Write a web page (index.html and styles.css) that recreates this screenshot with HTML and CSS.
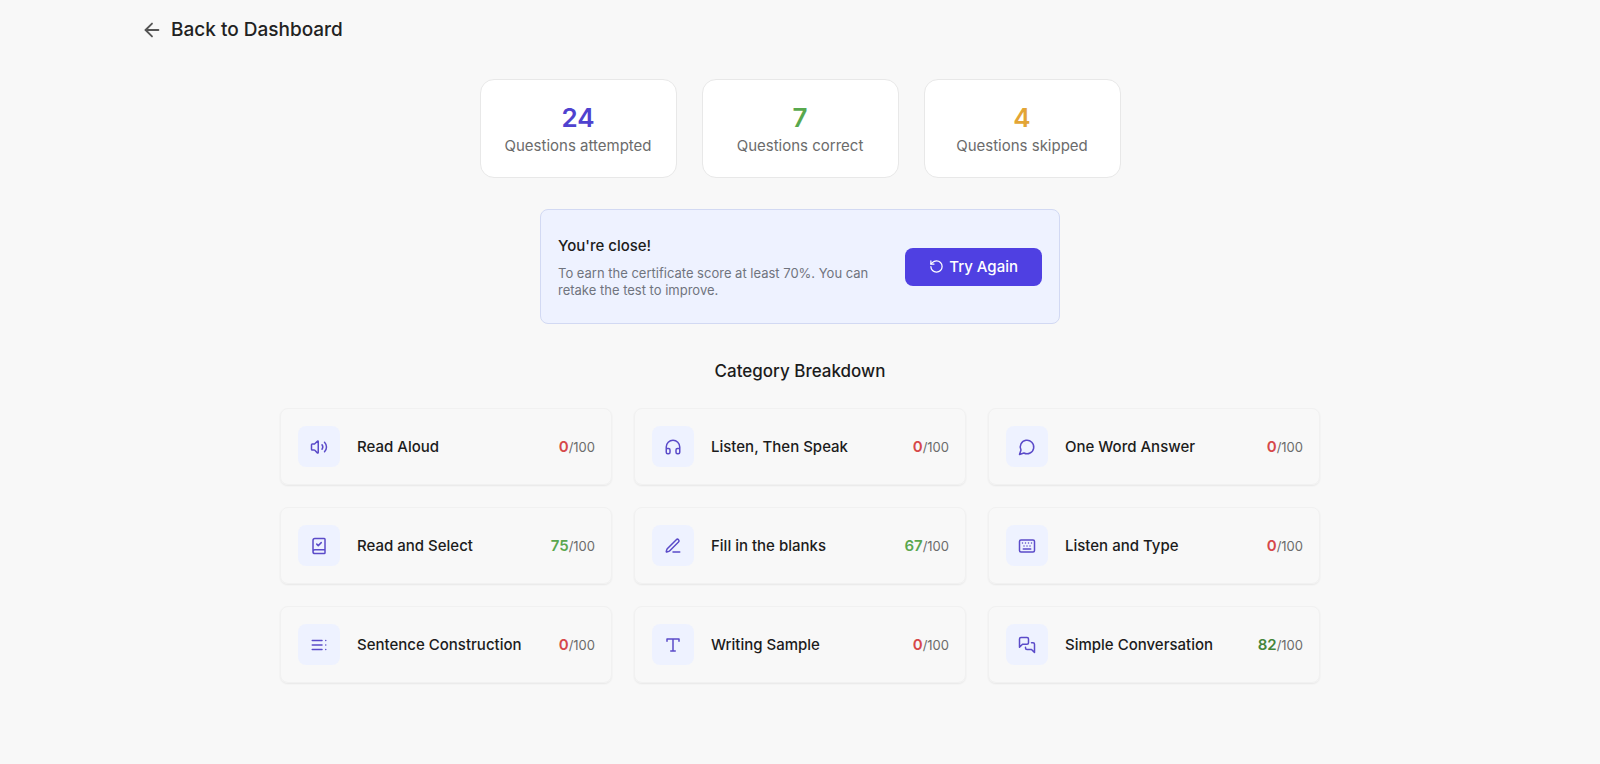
FILE: index.html
```html
<!DOCTYPE html>
<html lang="en">
<head>
    <meta charset="UTF-8">
    <meta name="viewport" content="width=device-width, initial-scale=1.0">
    <title>Test Results</title>
    <link rel="stylesheet" href="styles.css">
</head>
<body>
    <header class="page-header">
        <a href="#" class="back-link">
            <svg class="back-icon" viewBox="0 0 24 24"><path d="m12 19-7-7 7-7"/><path d="M19 12H5"/></svg>
            Back to Dashboard
        </a>
    </header>

    <main>
        <!-- Totals -->
        <section class="stats">
            <div class="stat-card">
                <p class="stat-value attempted">24</p>
                <p class="stat-label">Questions attempted</p>
            </div>
            <div class="stat-card">
                <p class="stat-value correct">7</p>
                <p class="stat-label">Questions correct</p>
            </div>
            <div class="stat-card">
                <p class="stat-value skipped">4</p>
                <p class="stat-label">Questions skipped</p>
            </div>
        </section>

        <!-- Retake banner -->
        <section class="retake">
            <div class="retake-text">
                <h2>You're close!</h2>
                <p>To earn the certificate score at least 70%. You can retake the test to improve.</p>
            </div>
            <button type="button" class="retake-button">
                <svg class="retake-icon" viewBox="0 0 24 24"><path d="M3 12a9 9 0 1 0 9-9 9.75 9.75 0 0 0-6.74 2.74L3 8"/><path d="M3 3v5h5"/></svg>
                Try Again
            </button>
        </section>

        <!-- Categories -->
        <section class="breakdown">
            <h2>Category Breakdown</h2>
            <ul class="categories">
                <li class="category">
                    <span class="category-icon">
                        <svg viewBox="0 0 24 24"><path d="M11 4.7a.7.7 0 0 0-1.2-.5L6.4 7.6A1.4 1.4 0 0 1 5.4 8H3a1 1 0 0 0-1 1v6a1 1 0 0 0 1 1h2.4a1.4 1.4 0 0 1 1 .4l3.4 3.4a.7.7 0 0 0 1.2-.5z"/><path d="M16 9a5 5 0 0 1 0 6"/><path d="M19.36 18.36a9 9 0 0 0 0-12.72"/></svg>
                    </span>
                    <span class="category-name">Read Aloud</span>
                    <span class="score"><b class="low">0</b>/100</span>
                </li>
                <li class="category">
                    <span class="category-icon">
                        <svg viewBox="0 0 24 24"><path d="M3 14h3a2 2 0 0 1 2 2v3a2 2 0 0 1-2 2H5a2 2 0 0 1-2-2v-7a9 9 0 0 1 18 0v7a2 2 0 0 1-2 2h-1a2 2 0 0 1-2-2v-3a2 2 0 0 1 2-2h3"/></svg>
                    </span>
                    <span class="category-name">Listen, Then Speak</span>
                    <span class="score"><b class="low">0</b>/100</span>
                </li>
                <li class="category">
                    <span class="category-icon">
                        <svg viewBox="0 0 24 24"><path d="M7.9 20A9 9 0 1 0 4 16.1L2 22Z"/></svg>
                    </span>
                    <span class="category-name">One Word Answer</span>
                    <span class="score"><b class="low">0</b>/100</span>
                </li>
                <li class="category">
                    <span class="category-icon">
                        <svg viewBox="0 0 24 24"><path d="M4 19.5v-15A2.5 2.5 0 0 1 6.5 2H19a1 1 0 0 1 1 1v18a1 1 0 0 1-1 1H6.5a1 1 0 0 1 0-5H20"/><path d="m9 9.5 2 2 4-4"/></svg>
                    </span>
                    <span class="category-name">Read and Select</span>
                    <span class="score"><b class="good">75</b>/100</span>
                </li>
                <li class="category">
                    <span class="category-icon">
                        <svg viewBox="0 0 24 24"><path d="M12 20h9"/><path d="M16.38 3.62a1 1 0 0 1 3 3L7.37 18.64a2 2 0 0 1-.86.5l-2.87.84a.5.5 0 0 1-.62-.62l.84-2.87a2 2 0 0 1 .5-.86z"/></svg>
                    </span>
                    <span class="category-name">Fill in the blanks</span>
                    <span class="score"><b class="good">67</b>/100</span>
                </li>
                <li class="category">
                    <span class="category-icon">
                        <svg viewBox="0 0 24 24"><rect x="2" y="4" width="20" height="16" rx="2"/><path d="M6 8h.01M10 8h.01M14 8h.01M18 8h.01M8 12h.01M12 12h.01M16 12h.01M7 16h10"/></svg>
                    </span>
                    <span class="category-name">Listen and Type</span>
                    <span class="score"><b class="low">0</b>/100</span>
                </li>
                <li class="category">
                    <span class="category-icon">
                        <svg viewBox="0 0 24 24"><path d="M16 12H3M16 18H3M16 6H3M21 12h.01M21 18h.01M21 6h.01"/></svg>
                    </span>
                    <span class="category-name">Sentence Construction</span>
                    <span class="score"><b class="low">0</b>/100</span>
                </li>
                <li class="category">
                    <span class="category-icon">
                        <svg viewBox="0 0 24 24"><path d="M4 7V4h16v3M9 20h6M12 4v16"/></svg>
                    </span>
                    <span class="category-name">Writing Sample</span>
                    <span class="score"><b class="low">0</b>/100</span>
                </li>
                <li class="category">
                    <span class="category-icon">
                        <svg viewBox="0 0 24 24"><path d="M14 9a2 2 0 0 1-2 2H6l-4 4V4a2 2 0 0 1 2-2h8a2 2 0 0 1 2 2z"/><path d="M18 9h2a2 2 0 0 1 2 2v11l-4-4h-6a2 2 0 0 1-2-2v-1"/></svg>
                    </span>
                    <span class="category-name">Simple Conversation</span>
                    <span class="score"><b class="high">82</b>/100</span>
                </li>
            </ul>
        </section>
    </main>
</body>
</html>
```
FILE: styles.css
```css
* {
    box-sizing: border-box;
    margin: 0;
    padding: 0;
}

body {
    font-family: Inter, sans-serif;
    font-size: 15px;
    background-color: #f8f8f8;
    color: #1c1c1c;
}

svg {
    fill: none;
    stroke: currentColor;
    stroke-width: 2;
    stroke-linecap: round;
    stroke-linejoin: round;
}

.page-header {
    max-width: 1318px;
    margin: 0 auto;
    padding-top: 18px;
}

.back-link {
    display: inline-flex;
    align-items: center;
    gap: 8px;
    color: #222;
    font-size: 19px;
    font-weight: 500;
    line-height: 24px;
    text-decoration: none;
}

.back-icon {
    width: 22px;
    height: 22px;
    color: #555;
}

main {
    display: flex;
    flex-direction: column;
    align-items: center;
    padding: 34px 20px 80px;
}

.stats {
    display: grid;
    grid-template-columns: repeat(3, 1fr);
    gap: 25px;
    width: 100%;
    max-width: 641px;
}

.stat-card {
    padding: 22px 16px 20px;
    background-color: #fff;
    border: 1px solid #e8e8e8;
    border-radius: 14px;
    text-align: center;
}

.stat-value {
    font-size: 26px;
    font-weight: 600;
    line-height: 32px;
}

.stat-label {
    color: #6b6b6b;
    line-height: 23px;
}

.attempted {
    color: #4f42cf;
}

.correct {
    color: #58a84e;
}

.skipped {
    color: #e3a536;
}

.retake {
    display: flex;
    align-items: center;
    justify-content: space-between;
    gap: 24px;
    width: 100%;
    max-width: 520px;
    margin-top: 31px;
    padding: 24px 17px;
    background-color: #eef2ff;
    border: 1px solid #d2d9f3;
    border-radius: 8px;
}

.retake-text {
    max-width: 320px;
}

.retake-text h2 {
    margin-bottom: 7px;
    font-size: 15px;
    font-weight: 500;
    line-height: 24px;
}

.retake-text p {
    color: #70747e;
    font-size: 13px;
    line-height: 17px;
}

.retake-button {
    display: flex;
    flex-shrink: 0;
    align-items: center;
    gap: 5px;
    padding: 8px 24px;
    background-color: #4f40e2;
    border: none;
    border-radius: 8px;
    color: #fff;
    font-family: inherit;
    font-size: 15px;
    font-weight: 500;
    line-height: 22px;
    cursor: pointer;
}

.retake-icon {
    width: 15px;
    height: 15px;
}

.breakdown {
    width: 100%;
    max-width: 1040px;
    margin-top: 34px;
}

.breakdown h2 {
    font-size: 17px;
    font-weight: 500;
    line-height: 26px;
    text-align: center;
}

.categories {
    display: grid;
    grid-template-columns: repeat(3, 1fr);
    gap: 22px;
    margin-top: 24px;
    list-style: none;
}

.category {
    display: flex;
    align-items: center;
    padding: 17px 16px 17px 17px;
    border: 1px solid #f1f1f1;
    border-radius: 8px;
    box-shadow: 0 1px 2px rgba(0, 0, 0, 0.07);
}

.category-icon {
    display: flex;
    align-items: center;
    justify-content: center;
    width: 42px;
    height: 41px;
    background-color: #eef2ff;
    border-radius: 8px;
    color: #5b4bc9;
}

.category-icon svg {
    width: 18px;
    height: 18px;
}

.category-name {
    flex: 1;
    margin-left: 17px;
    font-weight: 500;
}

.score {
    color: #6b6b6b;
    font-size: 13px;
}

.score b {
    font-size: 15px;
    font-weight: 600;
}

.low {
    color: #d6484a;
}

.good {
    color: #5aa74f;
}

.high {
    color: #45853a;
}
```
